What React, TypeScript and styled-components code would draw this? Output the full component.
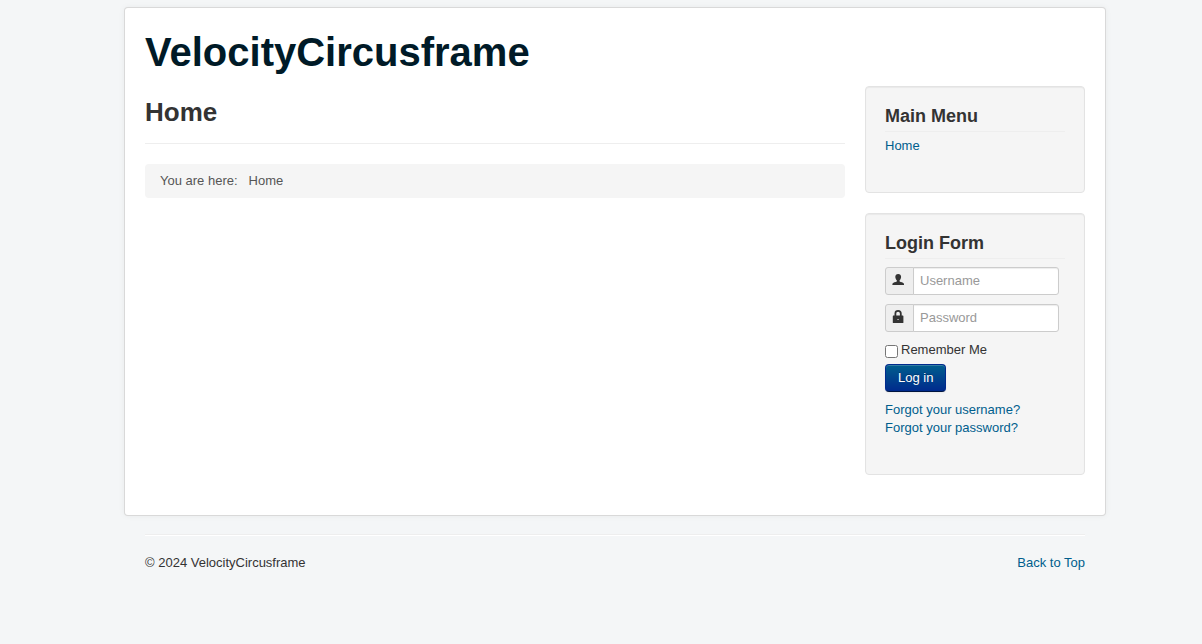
import React from "react";
import styled, { createGlobalStyle } from "styled-components";

const GlobalStyle = createGlobalStyle`
  *, *::before, *::after { box-sizing: border-box; }
  body {
    margin: 0;
    background: #f4f6f7;
    color: #333;
    font-family: "Liberation Sans", Arial, sans-serif;
    font-size: 13px;
    line-height: 18px;
  }
`;

const Page = styled.div`
  padding: 7px 0 20px 28px;
`;

const Container = styled.div`
  max-width: 982px;
  margin: 0 auto;
`;

const Panel = styled(Container)`
  padding: 20px;
  background: #fff;
  border: 1px solid rgba(0, 0, 0, 0.15);
  border-radius: 4px;
  box-shadow: 0 0 6px rgba(0, 0, 0, 0.05);
`;

const Header = styled.header`
  margin-bottom: 10px;
`;

const Brand = styled.a`
  display: block;
  color: #001a27;
  font-size: 40px;
  line-height: 48px;
  font-weight: bold;
  text-decoration: none;
`;

const Columns = styled.div`
  display: flex;
  align-items: flex-start;
  gap: 20px;
`;

const Main = styled.main`
  flex: 1;
  min-width: 0;
`;

const Sidebar = styled.aside`
  flex: 0 0 220px;
`;

const PageTitle = styled.h1`
  margin: 0 0 20px;
  padding: 8px 0 13px;
  border-bottom: 1px solid #eee;
  font-size: 26px;
  line-height: 36px;
`;

const Breadcrumb = styled.ul`
  display: flex;
  gap: 11px;
  margin: 0;
  padding: 8px 15px;
  list-style: none;
  color: #555;
  background: #f5f5f5;
  border-radius: 4px;
`;

const Well = styled.section`
  margin-bottom: 20px;
  padding: 19px;
  background: #f5f5f5;
  border: 1px solid #e3e3e3;
  border-radius: 4px;
  box-shadow: inset 0 1px 1px rgba(0, 0, 0, 0.05);
`;

const WellTitle = styled.h3`
  margin: 0 0 5px;
  padding-bottom: 4px;
  border-bottom: 1px solid #eee;
  font-size: 18px;
  line-height: 21px;
`;

const LinkList = styled.ul`
  margin: 0 0 18px;
  padding: 0;
  list-style: none;
`;

const TextLink = styled.a`
  color: #005e8d;
  text-decoration: none;
  &:hover { text-decoration: underline; }
`;

const Form = styled.form`
  display: flex;
  flex-direction: column;
  align-items: flex-start;
  padding-top: 3px;
`;

const Field = styled.div`
  display: flex;
  width: 174px;
  margin-bottom: 9px;
`;

const Addon = styled.label`
  flex: 0 0 29px;
  height: 28px;
  padding: 5px 6px;
  background: #eee;
  border: 1px solid #ccc;
  border-radius: 3px 0 0 3px;

  svg { display: block; }
`;

const Input = styled.input`
  flex: 1;
  min-width: 0;
  height: 28px;
  margin: 0 0 0 -1px;
  padding: 3px 6px 5px;
  color: #555;
  font: inherit;
  background: #fff;
  border: 1px solid #ccc;
  border-radius: 0 3px 3px 0;
  box-shadow: inset 0 1px 1px rgba(0, 0, 0, 0.075);
  &::placeholder { color: #999; opacity: 1; }
`;

const Remember = styled.div`
  display: flex;
  align-items: flex-start;
  gap: 3px;
  margin-bottom: 5px;
`;

const Checkbox = styled.input`
  width: 13px;
  height: 13px;
  margin: 4px 0 0;
`;

const Button = styled.button`
  height: 28px;
  margin-bottom: 9px;
  padding: 4px 12px;
  color: #fff;
  font: inherit;
  text-shadow: 0 -1px 0 rgba(0, 0, 0, 0.25);
  background: linear-gradient(#005e8d, #002a8d);
  border: 1px solid;
  border-color: #002a8d #002a8d #001541;
  border-radius: 4px;
  box-shadow: inset 0 1px 0 rgba(255, 255, 255, 0.2), 0 1px 2px rgba(0, 0, 0, 0.05);
  cursor: pointer;
`;

const Footer = styled(Container).attrs({ as: "footer" })`
  padding: 18px 21px 0;
`;

const Rule = styled.hr`
  margin: 0 0 18px;
  border: 0;
  border-top: 1px solid #eee;
  border-bottom: 1px solid #fff;
`;

const FooterRow = styled.div`
  display: flex;
  justify-content: space-between;
`;

const UserIcon = () => (
  <svg width="12" height="13" viewBox="0 0 12 13" fill="#333" aria-hidden="true">
    <path d="M6.2 0.9C8 0.9 9.1 2 9.1 3.8C9.1 5.4 8.4 6.6 7.6 7.3V8.5C8.7 9.1 11.5 9.4 12 10.7V12H0.4V10.7C0.9 9.4 3.7 9.1 4.8 8.5V7.3C4 6.6 3.3 5.4 3.3 3.8C3.3 2 4.4 0.9 6.2 0.9Z" />
  </svg>
);

const LockIcon = () => (
  <svg width="12" height="13" viewBox="0 0 12 13" aria-hidden="true">
    <path d="M3.4 6.5V3.5C3.4 1.7 4.4 0.9 6.1 0.9S8.8 1.7 8.8 3.5V6.5" fill="none" stroke="#333" strokeWidth="1.8" />
    <path fill="#333" fillRule="evenodd" d="M1.4 5.6H10.8Q11.4 5.6 11.4 6.2V12.4Q11.4 13 10.8 13H1.4Q0.8 13 0.8 12.4V6.2Q0.8 5.6 1.4 5.6ZM5.5 9V10H6.6V9Z" />
  </svg>
);

export default function App() {
  return (
    <>
      <GlobalStyle />
      <Page id="top">
        <Panel>
          <Header>
            <Brand href="#">VelocityCircusframe</Brand>
          </Header>
          <Columns>
            <Main>
              <PageTitle>Home</PageTitle>
              <Breadcrumb aria-label="Breadcrumbs">
                <li>You are here:</li>
                <li>Home</li>
              </Breadcrumb>
            </Main>
            <Sidebar>
              <Well>
                <WellTitle>Main Menu</WellTitle>
                <LinkList>
                  <li><TextLink href="#">Home</TextLink></li>
                </LinkList>
              </Well>
              <Well>
                <WellTitle>Login Form</WellTitle>
                <Form onSubmit={(e) => e.preventDefault()}>
                  <Field>
                    <Addon htmlFor="username" aria-label="Username"><UserIcon /></Addon>
                    <Input id="username" type="text" placeholder="Username" />
                  </Field>
                  <Field>
                    <Addon htmlFor="password" aria-label="Password"><LockIcon /></Addon>
                    <Input id="password" type="password" placeholder="Password" />
                  </Field>
                  <Remember>
                    <Checkbox id="remember" type="checkbox" />
                    <label htmlFor="remember">Remember Me</label>
                  </Remember>
                  <Button type="submit">Log in</Button>
                  <LinkList>
                    <li><TextLink href="#">Forgot your username?</TextLink></li>
                    <li><TextLink href="#">Forgot your password?</TextLink></li>
                  </LinkList>
                </Form>
              </Well>
            </Sidebar>
          </Columns>
        </Panel>
        <Footer>
          <Rule />
          <FooterRow>
            <span>© 2024 VelocityCircusframe</span>
            <TextLink href="#top">Back to Top</TextLink>
          </FooterRow>
        </Footer>
      </Page>
    </>
  );
}
